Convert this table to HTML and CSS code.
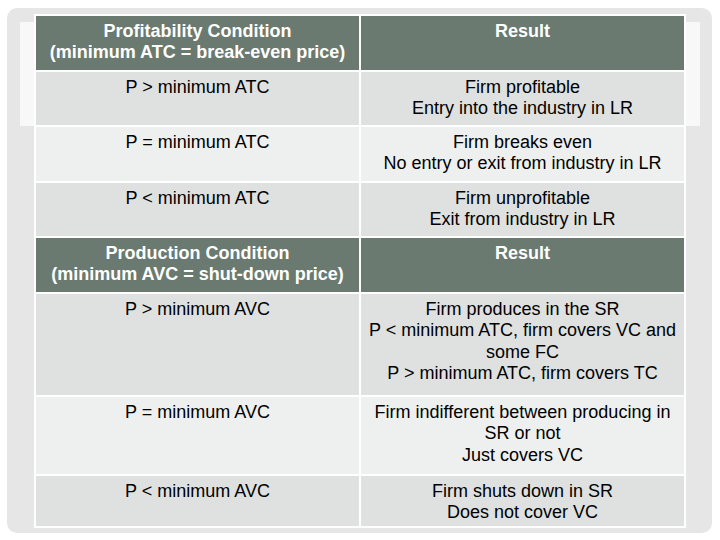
FILE: index.html
```html
<!DOCTYPE html>
<html>
<head>
<meta charset="utf-8">
<link rel="stylesheet" href="styles.css">
</head>
<body>
<div class="slide">
  <div class="frame">
    <div class="band"></div>
    <div class="table">
      <div class="cell head">Profitability Condition<br>(minimum ATC = break-even price)</div>
      <div class="cell head">Result</div>
      <div class="cell dark">P &gt; minimum ATC</div>
      <div class="cell dark">Firm profitable<br>Entry into the industry in LR</div>
      <div class="cell light">P = minimum ATC</div>
      <div class="cell light">Firm breaks even<br>No entry or exit from industry in LR</div>
      <div class="cell dark">P &lt; minimum ATC</div>
      <div class="cell dark">Firm unprofitable<br>Exit from industry in LR</div>
      <div class="cell head">Production Condition<br>(minimum AVC = shut-down price)</div>
      <div class="cell head">Result</div>
      <div class="cell dark">P &gt; minimum AVC</div>
      <div class="cell dark">Firm produces in the SR<br>P &lt; minimum ATC, firm covers VC and some FC<br>P &gt; minimum ATC, firm covers TC</div>
      <div class="cell light">P = minimum AVC</div>
      <div class="cell light">Firm indifferent between producing in SR or not<br>Just covers VC</div>
      <div class="cell dark">P &lt; minimum AVC</div>
      <div class="cell dark">Firm shuts down in SR<br>Does not cover VC</div>
    </div>
  </div>
</div>
</body>
</html>
```

FILE: styles.css
```css
html, body {
  margin: 0;
  padding: 0;
  background: #ffffff;
}

.slide {
  width: 720px;
  height: 540px;
  padding: 8px 0 0 7px;
  box-sizing: border-box;
}

.frame {
  position: relative;
  width: 705px;
  height: 525px;
  box-sizing: border-box;
  padding: 6px 0 0 27px;
  background: #e6e6e6;
  border-radius: 10px;
}

.band {
  position: absolute;
  left: 13px;
  top: 14px;
  width: 680px;
  height: 104px;
  background: #f8f8f8;
}

.table {
  position: relative;
  display: grid;
  width: 652px;
  box-sizing: border-box;
  grid-template-columns: 323px 323px;
  grid-template-rows: 54px 53px 54px 53px 54px 101px 77px 50px;
  gap: 2px;
  padding: 2px;
  background: #ffffff;
  font-family: "Liberation Sans", Arial, sans-serif;
  font-size: 18px;
  line-height: 21.4px;
  color: #000000;
}

.cell {
  text-align: center;
  padding: 5px 3px 0;
}

.head {
  background: #6a7a70;
  color: #ffffff;
  font-weight: bold;
}

.dark {
  background: #dee1e0;
}

.light {
  background: #eef0ef;
}
```
